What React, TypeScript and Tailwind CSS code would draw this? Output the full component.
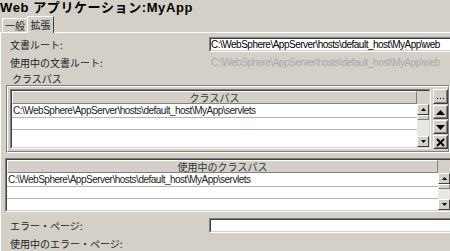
import React from 'react';

const latin = "font-['Liberation_Sans',Arial,'Noto_Sans_CJK_JP',sans-serif]";
const path1 = 'C:\\WebSphere\\AppServer\\hosts\\default_host\\MyApp\\web';
const path2 = 'C:\\WebSphere\\AppServer\\hosts\\default_host\\MyApp\\servlets';

const Sunken: React.FC<{ className?: string; inner?: string; children?: React.ReactNode }> = ({ className = '', inner = '', children }) => (
  <div className={`shrink-0 border border-t-[#808080] border-l-[#808080] border-b-white border-r-white ${className}`}>
    <div className={`h-full border border-t-[#404040] border-l-[#404040] border-b-[#d4d0c8] border-r-[#d4d0c8] ${inner}`}>{children}</div>
  </div>
);

const Raised: React.FC<{ className?: string; children?: React.ReactNode }> = ({ className = '', children }) => (
  <div className={`border border-t-white border-l-white border-b-[#404040] border-r-[#404040] bg-[#d4d0c8] ${className}`}>
    <div className="h-full flex items-center justify-center border border-t-[#d4d0c8] border-l-[#d4d0c8] border-b-[#808080] border-r-[#808080]">
      {children}
    </div>
  </div>
);

const ScrollBtn: React.FC<{ up?: boolean }> = ({ up }) => (
  <div className="h-[11px] flex items-center justify-center border border-t-white border-l-white border-b-[#404040] border-r-[#404040] bg-[#d4d0c8]">
    <svg width="5" height="3" viewBox="0 0 5 3">
      <path d={up ? 'M2.5 0L5 3H0Z' : 'M0 0H5L2.5 3Z'} fill="#000" />
    </svg>
  </div>
);

const ScrollBar: React.FC = () => (
  <div className="w-[12px] flex flex-col shrink-0">
    <div className="h-[13px] bg-[#d4d0c8]" />
    <ScrollBtn up />
    <div className="h-[5px] border border-t-white border-l-white border-b-[#808080] border-r-[#808080] bg-[#d4d0c8]" />
    <div className="flex-1 bg-[#e9e7e3]" />
    <ScrollBtn />
  </div>
);

const Header: React.FC<{ label: string }> = ({ label }) => (
  <div className="h-[13px] shrink-0 flex items-center justify-center border border-t-white border-l-white border-b-[#808080] border-r-[#808080] bg-[#d4d0c8] text-[10px] leading-[11px] text-[#333]">
    {label}
  </div>
);

const Rows: React.FC<{ value: string }> = ({ value }) => (
  <div className="flex-1 flex flex-col bg-white">
    <div className={`h-[14px] shrink-0 border-b border-[#b4b4b4] pl-px flex items-center ${latin} text-[10px] tracking-[-0.5px] whitespace-nowrap`}>
      {value}
    </div>
    <div className="h-[12px] shrink-0 border-b border-[#b4b4b4]" />
    <div className="flex-1" />
  </div>
);

export default function App() {
  return (
    <div className="w-[450px] h-[251px] overflow-hidden bg-[#d4d0c8] text-[#222] flex flex-col font-['Noto_Sans_CJK_JP',sans-serif] text-[10px]">
      <div className={`h-[15px] shrink-0 font-bold text-[13px] leading-[15px] tracking-[0.6px] text-black whitespace-nowrap ${latin}`}>
        Web アプリケーション:MyApp
      </div>

      <div className="h-[17px] shrink-0 flex items-end pl-[2px]">
        <div className="h-[14px] w-[25px] border-t border-l border-white flex items-center justify-center leading-[12px]">一般</div>
        <div className="relative z-10 -mb-px h-[17px] w-[27px] border-t border-l border-r border-t-white border-l-white border-r-[#404040] bg-[#d4d0c8] flex items-center justify-center leading-[12px]">
          拡張
        </div>
      </div>

      <div className="flex-1 flex flex-col border-t border-l border-white">
        <div className="mt-[4px] h-[15px] shrink-0 flex items-center">
          <span className="w-[208px] shrink-0 pl-[9px] leading-[12px]">文書ルート:</span>
          <Sunken className="w-[250px] h-[15px]" inner={`flex items-center ${latin} text-[10px] tracking-[-0.5px] text-black whitespace-nowrap bg-white`}>
            {path1}
          </Sunken>
        </div>

        <div className="mt-[3px] h-[15px] shrink-0 flex items-center">
          <span className="w-[210px] shrink-0 pl-[9px] leading-[12px]">使用中の文書ルート:</span>
          <span className={`${latin} text-[10px] tracking-[-0.5px] text-[#a9a9a9] whitespace-nowrap`}>{path1}</span>
        </div>

        <div className="relative mt-[3px] ml-[5px] pt-[12px] shrink-0">
          <span className="absolute z-10 left-[5px] top-0 px-px bg-[#d4d0c8] leading-[12px]">クラスパス</span>
          <div className="border border-t-[#808080] border-l-[#808080] border-b-white border-r-white">
            <div className="border border-t-white border-l-white border-b-[#808080] border-r-[#808080] pt-[2px] pb-[2px] pl-[2px] flex gap-[2px]">
              <Sunken className="w-[421px] h-[60px]" inner="flex">
                <div className="flex-1 flex flex-col">
                  <Header label="クラスパス" />
                  <Rows value={path2} />
                </div>
                <ScrollBar />
              </Sunken>
              <div className="w-[15px] flex flex-col gap-px shrink-0">
                <Raised className="h-[15px]">
                  <svg width="7" height="3" viewBox="0 0 7 3" className="mt-[3px]">
                    <rect x="0" y="1" width="1" height="1" fill="#000" />
                    <rect x="3" y="1" width="1" height="1" fill="#000" />
                    <rect x="6" y="1" width="1" height="1" fill="#000" />
                  </svg>
                </Raised>
                <Raised className="h-[14px]">
                  <svg width="9" height="5" viewBox="0 0 9 5"><path d="M4.5 0L9 5H0Z" fill="#000" /></svg>
                </Raised>
                <Raised className="h-[14px]">
                  <svg width="9" height="5" viewBox="0 0 9 5"><path d="M0 0H9L4.5 5Z" fill="#000" /></svg>
                </Raised>
                <Raised className="h-[14px]">
                  <svg width="9" height="9" viewBox="0 0 9 9"><path d="M1 1L8 8M8 1L1 8" stroke="#000" strokeWidth="2" /></svg>
                </Raised>
              </div>
            </div>
          </div>
        </div>

        <Sunken className="mt-[5px] ml-[4px] w-[447px] h-[54px]" inner="flex">
          <div className="flex-1 flex flex-col">
            <Header label="使用中のクラスパス" />
            <Rows value={path2} />
          </div>
          <ScrollBar />
        </Sunken>

        <div className="mt-[6px] h-[15px] shrink-0 flex items-center">
          <span className="w-[208px] shrink-0 pl-[9px] leading-[12px]">エラー・ページ:</span>
          <Sunken className="w-[250px] h-[15px]" inner="bg-white" />
        </div>

        <div className="mt-[3px] h-[15px] shrink-0 flex items-center">
          <span className="pl-[9px] leading-[12px]">使用中のエラー・ページ:</span>
        </div>
      </div>
    </div>
  );
}
